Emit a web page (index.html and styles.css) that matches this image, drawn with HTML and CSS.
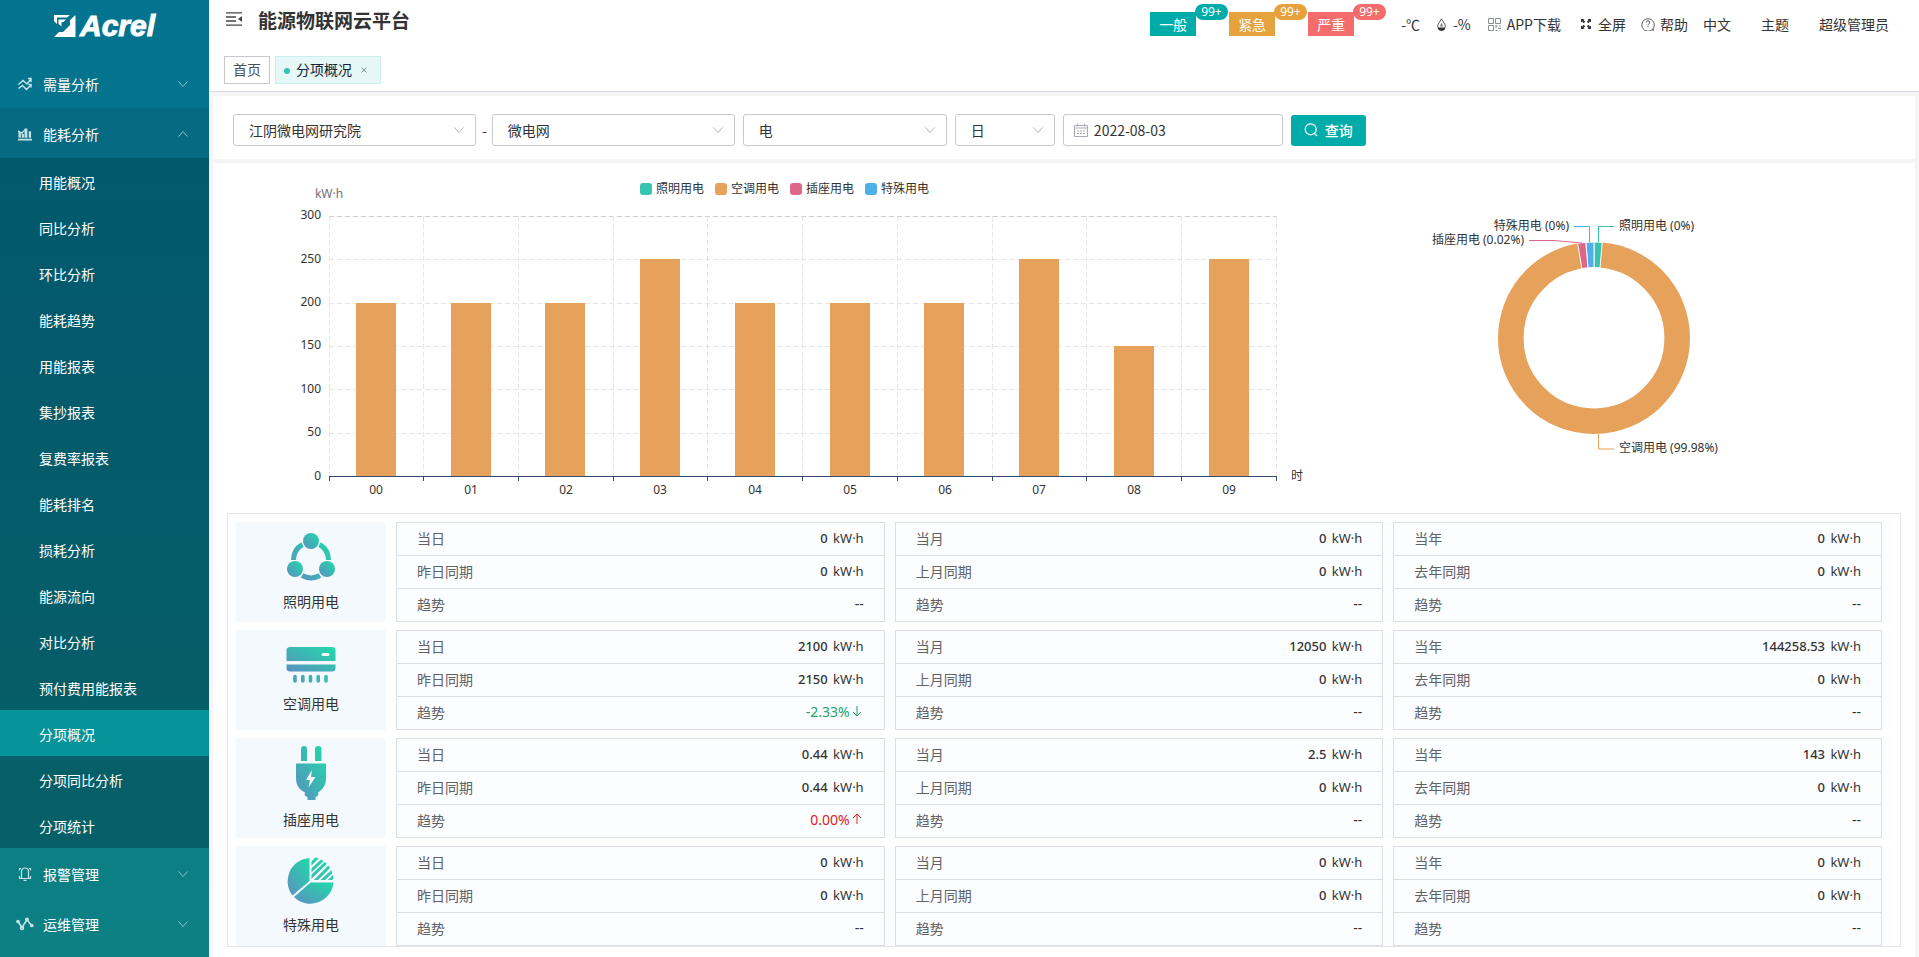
FILE: index.html
```html
<!DOCTYPE html>
<html lang="zh-CN">
<head>
<meta charset="utf-8">
<title>能源物联网云平台</title>
<link rel="stylesheet" href="styles.css">
</head>
<body>
<svg class="defs" width="0" height="0" aria-hidden="true">
  <defs>
    <linearGradient id="teal" x1="0" y1="1" x2="1" y2="0"><stop offset="0" stop-color="#5b8fc0"/><stop offset="1" stop-color="#1fdba9"/></linearGradient>
    <linearGradient id="tealUser" gradientUnits="userSpaceOnUse" x1="4" y1="48" x2="46" y2="4"><stop offset="0" stop-color="#5b8fc0"/><stop offset="1" stop-color="#1fdba9"/></linearGradient>
    <symbol id="chev" viewBox="0 0 12 12"><path d="M1.500 3.500 6 8.500l4.500-5" fill="none" stroke="currentColor"/></symbol>
  </defs>
</svg>
<div class="app">
  <nav class="sidebar">
    <a class="logo" href="#" aria-label="Acrel">
      <svg width="22" height="22" viewBox="0 0 22 22"><path d="M0 0h16l-3 2.500H3V9L0 6zM4.500 4.500H12L9.500 7H7.500v4.500L4.500 9zM21.500 0v22H0L5 17h4L16 10V5z" fill="#fff"/></svg>
      <span>Acrel</span>
    </a>
    <button class="group" type="button">
      <svg width="14" height="14" viewBox="0 0 14 14" fill="none" stroke="currentColor" stroke-width="1.500"><path d="M.5 7.500 5 3.500l4 3.500 4-5M10 1.500h3V5M.5 11.500 4.500 8.500l4 4L13 8M10.500 7.500H13v3"/></svg>
      <span>需量分析</span><svg class="arrow" width="12" height="12"><use href="#chev"/></svg>
    </button>
    <button class="group open" type="button" aria-expanded="true">
      <svg width="14" height="14" viewBox="0 0 15 14" fill="currentColor"><path d="M0 12h15v2H0zM.5 5H3v6H.5zM4 7h2.300v4H4zM7 1h3v10H7zM11.500 4H14v7h-2.500zM0 3l4 2 4-4v1.500L4.500 7 0 5z"/></svg>
      <span>能耗分析</span><svg class="arrow" width="12" height="12"><use href="#chev"/></svg>
    </button>
    <div class="submenu">
      <a href="#">用能概况</a>
      <a href="#">同比分析</a>
      <a href="#">环比分析</a>
      <a href="#">能耗趋势</a>
      <a href="#">用能报表</a>
      <a href="#">集抄报表</a>
      <a href="#">复费率报表</a>
      <a href="#">能耗排名</a>
      <a href="#">损耗分析</a>
      <a href="#">能源流向</a>
      <a href="#">对比分析</a>
      <a href="#">预付费用能报表</a>
      <a class="current" href="#">分项概况</a>
      <a href="#">分项同比分析</a>
      <a href="#">分项统计</a>
    </div>
    <button class="group" type="button">
      <svg width="14" height="14" viewBox="0 0 14 14" fill="none" stroke="currentColor" stroke-width="1.200"><path d="M3.500 11V4.500a3.500 3.500 0 0 1 7 0V11M1 11.500h12M5.500 13.300h3M1.500 3.500v-2H3M12.500 3.500v-2H11M1.500 9v2M12.500 9v2"/></svg>
      <span>报警管理</span><svg class="arrow" width="12" height="12"><use href="#chev"/></svg>
    </button>
    <button class="group" type="button">
      <svg width="14" height="14" viewBox="1 0 14 14" fill="none" stroke="currentColor" stroke-width="1.500"><path d="m1 4.500 4 6L10 2.500l4.500 6"/><circle cx="1" cy="4.500" r="1.100" fill="currentColor"/><circle cx="5" cy="11" r="1.500"/><circle cx="10" cy="2.500" r="1.200" fill="currentColor"/><circle cx="14.800" cy="8.500" r="1.100" fill="currentColor"/></svg>
      <span>运维管理</span><svg class="arrow" width="12" height="12"><use href="#chev"/></svg>
    </button>
  </nav>

  <div class="main">
    <header class="header">
      <div class="topbar">
        <button class="fold" type="button" aria-label="折叠菜单"><svg width="16" height="14" viewBox="0 0 16 14"><path d="M0 .8h16M0 5h10M0 9h10M0 13.200h16" stroke="#444" stroke-width="1.300"/><path d="M16 4v6l-4-3z" fill="#444"/></svg></button>
        <h1>能源物联网云平台</h1>
        <div class="tools">
          <button class="alarm normal" type="button">一般<span class="badge">99+</span></button>
          <button class="alarm urgent" type="button">紧急<span class="badge">99+</span></button>
          <button class="alarm severe" type="button">严重<span class="badge">99+</span></button>
          <span class="temp">-℃</span>
          <span class="humid"><svg width="9" height="13" viewBox="0 0 9 13"><path d="M4.500.8C6 3.800 8.300 6 8.300 8.500a3.800 3.800 0 0 1-7.600 0C.7 6 3 3.800 4.500.8z" fill="none" stroke="#444" stroke-width=".9"/><path d="M1 9.500h7a3.500 3.200 0 0 1-7 0z" fill="#333"/><path d="M4.500 4.500 3 8.500h3z" fill="#777"/></svg>-%</span>
          <a class="app-link" href="#"><svg width="13" height="13" viewBox="0 0 13 13" fill="none" stroke="#8a9096"><path d="M.5.5h5v5h-5zM7.500.5h5v5h-5zM.5 7.500h5v5h-5zM7.500 8h2M8 7.500v2.500M11 8h2M10 10.500h3M7.500 12.500h2M11.500 12.500h1"/></svg>APP下载</a>
          <a class="full" href="#"><svg width="12" height="12" viewBox="0 0 12 12" fill="#333"><path d="M1 1h3.500L3.500 2l1.700 1.700-1.500 1.500L2 3.500l-1 1zM11 1v3.500l-1-1-1.700 1.700-1.500-1.500L8.500 2l-1-1zM1 11V7.500l1 1 1.700-1.700 1.500 1.500L3.500 10l1 1zM11 11H7.500l1-1-1.700-1.700 1.500-1.500L10 8.500l1-1z"/></svg>全屏</a>
          <a class="help" href="#"><svg width="14" height="14" viewBox="0 0 14 14"><path d="M13 13h-2.300a6.200 6.200 0 1 1 1-.9L13 13z" fill="none" stroke="#555"/><path d="M5.300 5.500a1.700 1.700 0 1 1 2.300 1.600q-.7.300-.7 1.300M6.900 9.300v1" fill="none" stroke="#555"/></svg>帮助</a>
          <a class="lang" href="#">中文</a>
          <a class="theme" href="#">主题</a>
          <a class="user" href="#">超级管理员</a>
        </div>
      </div>
      <div class="tabs">
        <a class="tab" href="#">首页</a>
        <a class="tab active" href="#"><i class="dot"></i>分项概况<svg width="6" height="6" viewBox="0 0 6 6"><path d="m.5.5 5 5m0-5-5 5" stroke="#7d8f99"/></svg></a>
      </div>
    </header>

    <form class="filters">
      <span class="field wide"><select aria-label="单位"><option>江阴微电网研究院</option></select><svg width="12" height="12"><use href="#chev"/></svg></span>
      <span class="dash">-</span>
      <span class="field wide"><select aria-label="区域"><option>微电网</option></select><svg width="12" height="12"><use href="#chev"/></svg></span>
      <span class="field mid"><select aria-label="能源"><option>电</option></select><svg width="12" height="12"><use href="#chev"/></svg></span>
      <span class="field small"><select aria-label="周期"><option>日</option></select><svg width="12" height="12"><use href="#chev"/></svg></span>
      <span class="field date"><svg width="14" height="14" viewBox="0 0 14 14" fill="none" stroke="#a9adb3"><path d="M.5 2.500h13v11H.5zM.5 5h13M3.500.5v3M10.500.5v3"/><path d="M3 8h8M3 10.500h8" stroke-dasharray="2 1"/></svg><input type="text" value="2022-08-03" aria-label="日期"></span>
      <button class="query" type="button"><svg width="14" height="14" viewBox="0 0 14 14" fill="none" stroke="#fff" stroke-width="1.200"><circle cx="6.700" cy="6.300" r="5.500"/><path d="m10.500 10.300 2.500 2.700"/></svg>查询</button>
    </form>

    <main class="content">
      <section class="charts">
        <svg class="chart" viewBox="0 0 1134 350" role="img" aria-label="分项用电柱状图">
          <g class="legend">
            <rect x="427" y="20" width="12" height="12" rx="3" fill="#36c3b0"/><text x="443" y="30">照明用电</text>
            <rect x="502" y="20" width="12" height="12" rx="3" fill="#e6a15a"/><text x="518" y="30">空调用电</text>
            <rect x="577" y="20" width="12" height="12" rx="3" fill="#dc6789"/><text x="593" y="30">插座用电</text>
            <rect x="652" y="20" width="12" height="12" rx="3" fill="#4db0ea"/><text x="668" y="30">特殊用电</text>
          </g>
          <text class="unit" x="116" y="35" text-anchor="middle">kW·h</text>
          <path class="grid top" d="M116 53.500H1063"/>
          <path class="grid" d="M116 96.500H1063M116 140.500H1063M116 183.500H1063M116 226.500H1063M116 270.500H1063"/>
          <path class="grid" d="M116.500 53V313M210.500 53V313M305.500 53V313M400.500 53V313M494.500 53V313M589.500 53V313M684.500 53V313M779.500 53V313M873.500 53V313M968.500 53V313M1063.500 53V313"/>
          <g fill="#e6a15a">
            <rect x="143" y="140" width="40" height="173"/><rect x="238" y="140" width="40" height="173"/><rect x="332" y="140" width="40" height="173"/>
            <rect x="427" y="96" width="40" height="217"/><rect x="522" y="140" width="40" height="173"/><rect x="617" y="140" width="40" height="173"/>
            <rect x="711" y="140" width="40" height="173"/><rect x="806" y="96" width="40" height="217"/><rect x="901" y="183" width="40" height="130"/>
            <rect x="996" y="96" width="40" height="217"/>
          </g>
          <path class="axis" d="M116 313.500H1064M116.500 313v5M210.500 313v5M305.500 313v5M400.500 313v5M494.500 313v5M589.500 313v5M684.500 313v5M779.500 313v5M873.500 313v5M968.500 313v5M1063.500 313v5"/>
          <g text-anchor="end">
            <text x="108" y="56">300</text><text x="108" y="100">250</text><text x="108" y="143">200</text><text x="108" y="186">150</text><text x="108" y="230">100</text><text x="108" y="273">50</text><text x="108" y="317">0</text>
          </g>
          <g text-anchor="middle">
            <text x="163" y="331">00</text><text x="258" y="331">01</text><text x="353" y="331">02</text><text x="447" y="331">03</text><text x="542" y="331">04</text><text x="637" y="331">05</text><text x="732" y="331">06</text><text x="826" y="331">07</text><text x="921" y="331">08</text><text x="1016" y="331">09</text>
          </g>
          <text x="1078" y="317">时</text>
        </svg>
        <svg class="chart" viewBox="0 0 568 350" role="img" aria-label="分项用电占比">
          <circle cx="247" cy="175" r="83.200" fill="none" stroke="#e6a15a" stroke-width="25.600"/>
          <g stroke="#fff" stroke-width="1">
            <path d="M247 79a96 96 0 0 1 8.200.4l-2.200 25.500a70.500 70.500 0 0 0-6-.4z" fill="#36c3b0"/>
            <path d="M247 79a96 96 0 0 0-8.200.4l2.200 25.500a70.500 70.500 0 0 1 6-.4z" fill="#4db0ea"/>
            <path d="M238.800 79.400a96 96 0 0 0-8.200 1l4.300 25.100a70.500 70.500 0 0 1 6.100-.6z" fill="#dc6789"/>
          </g>
          <g fill="none">
            <path d="M251.500 79V63.500H267" stroke="#36c3b0"/>
            <path d="M242.500 79V63.500H227" stroke="#4db0ea"/>
            <path d="M235 80 207 77.500H182" stroke="#dc6789"/>
            <path d="M251.500 271v15H267" stroke="#e6a15a"/>
          </g>
          <text x="272" y="67">照明用电 (0%)</text>
          <text x="222" y="67" text-anchor="end">特殊用电 (0%)</text>
          <text x="177" y="81" text-anchor="end">插座用电 (0.02%)</text>
          <text x="272" y="289">空调用电 (99.98%)</text>
        </svg>
      </section>

      <section class="panel">
        <div class="item">
          <div class="kind"><svg width="50" height="50" viewBox="0 0 50 50"><g fill="none" stroke="url(#tealUser)" stroke-width="5"><path d="M7.500 28a18 18 0 0 1 9-15.500M33.500 12.500a18 18 0 0 1 9 15.500M16 43.500a19 19 0 0 0 18 0"/></g><g fill="url(#teal)"><circle cx="25" cy="9" r="8"/><circle cx="9" cy="37" r="8"/><circle cx="41" cy="37" r="8"/></g></svg><span>照明用电</span></div>
          <div class="blocks">
            <table><tr><th>当日</th><td><b>0</b> kW·h</td></tr><tr><th>昨日同期</th><td><b>0</b> kW·h</td></tr><tr><th>趋势</th><td class="trend">--</td></tr></table>
            <table><tr><th>当月</th><td><b>0</b> kW·h</td></tr><tr><th>上月同期</th><td><b>0</b> kW·h</td></tr><tr><th>趋势</th><td class="trend">--</td></tr></table>
            <table><tr><th>当年</th><td><b>0</b> kW·h</td></tr><tr><th>去年同期</th><td><b>0</b> kW·h</td></tr><tr><th>趋势</th><td class="trend">--</td></tr></table>
          </div>
        </div>
        <div class="item">
          <div class="kind"><svg width="50" height="38" viewBox="0 0 50 38"><path fill="url(#teal)" fill-rule="evenodd" d="M4 1h42a3.500 3.500 0 0 1 3.500 3.500V15H.5V4.500A3.500 3.500 0 0 1 4 1zm33 6a1.500 1.500 0 0 0 0 3h5a1.500 1.500 0 0 0 0-3zM.5 18.500h49V22a3.500 3.500 0 0 1-3.500 3.500H4A3.500 3.500 0 0 1 .5 22z"/><path d="M9 30.500v4.500M16.800 30.500v4.500M24.500 30.500v4.500M32.200 30.500v4.500M40 30.500v4.500" fill="none" stroke="url(#tealUser)" stroke-width="3.600" stroke-linecap="round"/></svg><span>空调用电</span></div>
          <div class="blocks">
            <table><tr><th>当日</th><td><b>2100</b> kW·h</td></tr><tr><th>昨日同期</th><td><b>2150</b> kW·h</td></tr><tr><th>趋势</th><td class="trend down">-2.33%<svg width="10" height="12" viewBox="0 0 10 12"><path d="M5 1v10M1 7l4 4 4-4" fill="none" stroke="currentColor"/></svg></td></tr></table>
            <table><tr><th>当月</th><td><b>12050</b> kW·h</td></tr><tr><th>上月同期</th><td><b>0</b> kW·h</td></tr><tr><th>趋势</th><td class="trend">--</td></tr></table>
            <table><tr><th>当年</th><td><b>144258.53</b> kW·h</td></tr><tr><th>去年同期</th><td><b>0</b> kW·h</td></tr><tr><th>趋势</th><td class="trend">--</td></tr></table>
          </div>
        </div>
        <div class="item">
          <div class="kind"><svg width="32" height="54" viewBox="0 0 32 54"><path fill="url(#teal)" fill-rule="evenodd" d="M6 15V3q0-3 3-3t3 3v12zM20 15V3q0-3 3.300-3T26.500 3v12zM1 17.500h30V32c0 8-4 12-8 14.500q1.500 3.500-2.500 4.500v3h-8v-3q-4-1-2.500-4.500C5 44 1 40 1 32zM17 24l-6 10h4l-1.500 7.500L20.500 31H16z"/></svg><span>插座用电</span></div>
          <div class="blocks">
            <table><tr><th>当日</th><td><b>0.44</b> kW·h</td></tr><tr><th>昨日同期</th><td><b>0.44</b> kW·h</td></tr><tr><th>趋势</th><td class="trend up">0.00%<svg width="10" height="12" viewBox="0 0 10 12"><path d="M5 11V1M1 5l4-4 4 4" fill="none" stroke="currentColor"/></svg></td></tr></table>
            <table><tr><th>当月</th><td><b>2.5</b> kW·h</td></tr><tr><th>上月同期</th><td><b>0</b> kW·h</td></tr><tr><th>趋势</th><td class="trend">--</td></tr></table>
            <table><tr><th>当年</th><td><b>143</b> kW·h</td></tr><tr><th>去年同期</th><td><b>0</b> kW·h</td></tr><tr><th>趋势</th><td class="trend">--</td></tr></table>
          </div>
        </div>
        <div class="item">
          <div class="kind"><svg width="50" height="48" viewBox="0 0 50 48"><defs><clipPath id="wedge"><path d="M25.500 0A23 23 0 0 1 47.500 23h-22z"/></clipPath></defs><path d="M23.500 1v23L6.500 38.500A23.300 23.300 0 0 1 23.500 1z" fill="url(#teal)"/><path d="M24.500 25.500h23A23.300 23.300 0 0 1 8 40z" fill="url(#teal)"/><path clip-path="url(#wedge)" d="M23 9 33-1M23 15.500 41-1M23 22 45 1M27 26 48 5M34 25.500 50 11M41 26l9-9" fill="none" stroke="url(#tealUser)" stroke-width="3"/></svg><span>特殊用电</span></div>
          <div class="blocks">
            <table><tr><th>当日</th><td><b>0</b> kW·h</td></tr><tr><th>昨日同期</th><td><b>0</b> kW·h</td></tr><tr><th>趋势</th><td class="trend">--</td></tr></table>
            <table><tr><th>当月</th><td><b>0</b> kW·h</td></tr><tr><th>上月同期</th><td><b>0</b> kW·h</td></tr><tr><th>趋势</th><td class="trend">--</td></tr></table>
            <table><tr><th>当年</th><td><b>0</b> kW·h</td></tr><tr><th>去年同期</th><td><b>0</b> kW·h</td></tr><tr><th>趋势</th><td class="trend">--</td></tr></table>
          </div>
        </div>
      </section>
    </main>
  </div>
</div>
</body>
</html>
```
FILE: styles.css
```css
* { box-sizing: border-box; }
body {
  margin: 0;
  font: 14px/20px "Noto Sans CJK SC", "Noto Sans", sans-serif;
  color: #333;
  background: #f5f5f7;
}
a { color: inherit; text-decoration: none; }
button, select, input { font: inherit; color: inherit; }
button { border: 0; background: none; padding: 0; cursor: pointer; }
svg { flex: none; }
.defs { position: absolute; }
.app { display: flex; min-height: 100vh; }

.sidebar {
  width: 209px;
  flex: none;
  color: #fff;
  background: linear-gradient(#03738f, #0c8083);
}
.logo {
  display: flex;
  align-items: center;
  justify-content: center;
  gap: 4px;
  height: 58px;
  padding-bottom: 6px;
  font: italic bold 30px/30px "Liberation Sans", sans-serif;
  -webkit-text-stroke: 1px #fff;
}
.group {
  display: flex;
  align-items: center;
  width: 100%;
  height: 50px;
  padding: 2px 20px 0 18px;
  text-align: left;
}
.group > svg { color: #c8e3e8; overflow: visible; }
.group span { margin: 0 auto 0 11px; }
.group .arrow { color: #8fc4cf; }
.group.open { background: #066a82; }
.group.open .arrow { transform: rotate(180deg); }
.submenu { background: rgba(0, 24, 36, 0.3); }
.submenu a {
  display: block;
  height: 46px;
  padding: 2px 0 0 39px;
  line-height: 44px;
}
.submenu .current { background: #05949a; }

.main { flex: 1; min-width: 0; display: flex; flex-direction: column; }
.header { background: #fff; border-bottom: 1px solid #d8dce5; margin-bottom: 4px; padding-bottom: 7px; }
.topbar { display: flex; align-items: flex-start; height: 56px; padding: 0 30px 0 17px; }
.fold { display: flex; padding-top: 12px; }
h1 { margin: 6px auto 0 16px; font-size: 19px; line-height: 28px; font-weight: bold; }
.tools { display: flex; align-items: center; padding-top: 12px; line-height: 24px; }
.tools a, .humid { display: flex; align-items: center; }
.alarm { position: relative; width: 46px; height: 24px; margin-right: 33px; color: #fff; line-height: 24px; }
.badge {
  position: absolute;
  top: -8px;
  left: 45px;
  padding: 0 6px;
  border-radius: 8px;
  background: inherit;
  font: 12px/16px "Noto Sans", sans-serif;
}
.normal { background: #00aca9; }
.urgent { background: #e6a23c; }
.severe { background: #f56c6c; }
.temp { margin: 0 17px 0 14px; }
.humid { gap: 7px; margin-right: 17px; }
.app-link { gap: 6px; margin-right: 19px; }
.full { gap: 6px; margin-right: 15px; }
.help { gap: 5px; margin-right: 15px; }
.lang, .theme { margin-right: 30px; }
.tabs { display: flex; gap: 5px; padding-left: 15px; }
.tab {
  display: flex;
  align-items: center;
  height: 28px;
  padding: 0 8px 2px;
  border: 1px solid #c8c8cc;
  color: #495060;
}
.tab.active { padding-right: 13px; border-color: #cdeeec; background: #e5f7f6; color: #123; }
.dot { width: 6px; height: 6px; margin: 4px 6px 0 0; border-radius: 50%; background: #36c3b0; }
.tab svg { margin: 2px 0 0 9px; }

.filters {
  display: flex;
  align-items: center;
  gap: 8px;
  height: 63px;
  margin: 0 4px 4px;
  padding: 5px 20px 0;
  background: #fff;
}
.field { position: relative; display: flex; align-items: center; }
.field > svg { position: absolute; right: 11px; color: #aeb2b8; pointer-events: none; }
.field select, .field input {
  width: 100%;
  height: 32px;
  padding: 0 15px;
  border: 1px solid #c8c9cc;
  border-radius: 3px;
  background: #fff;
  appearance: none;
}
.wide { width: 243px; }
.mid { width: 204px; }
.small { width: 100px; }
.date { width: 220px; }
.date > svg { left: 11px; }
.date input { padding-left: 30px; }
.dash { margin: 0 -3px 0 -2px; }
.query {
  display: flex;
  align-items: center;
  justify-content: center;
  gap: 7px;
  width: 75px;
  height: 31px;
  border-radius: 3px;
  background: #00aca9;
  color: #fff;
  font-weight: 500;
}

.content { flex: 1; margin: 0 4px; background: #fff; }
.charts { display: grid; grid-template-columns: minmax(0, 1fr) 568px; }
.chart { display: block; width: 100%; height: 350px; font: 12px "Noto Sans", "Noto Sans CJK SC", sans-serif; fill: #333; }
.chart .unit { fill: #6e7079; }
.grid { fill: none; stroke: #e6e6e9; stroke-dasharray: 5 3; }
.grid.top { stroke: #cfcfd2; }
.axis { fill: none; stroke: #354a70; }

.panel { margin: 0 14px; padding: 8px 8px 0; border: 1px solid #e2e4e6; }
.item { display: flex; gap: 10px; }
.item + .item { margin-top: 8px; }
.kind {
  display: flex;
  flex-direction: column;
  align-items: center;
  justify-content: center;
  gap: 9px;
  width: 150px;
  height: 100px;
  padding-bottom: 1px;
  background: #f3f9fc;
}
.blocks {
  flex: 1;
  display: grid;
  grid-template-columns: repeat(3, 1fr);
  gap: 10px;
  padding-right: 10px;
  background: #fbfdff;
}
table { width: 100%; border: 1px solid #dcdfe3; border-collapse: collapse; }
tr { height: 33px; border-bottom: 1px solid #dcdfe3; }
th, td { padding: 0 20px 2px; line-height: 20px; }
th { text-align: left; font-weight: normal; color: #606266; }
td { text-align: right; font-family: "Noto Sans", sans-serif; font-size: 13px; }
td b { margin-right: 2px; font-weight: 500; }
.trend { font-size: 14px; }
.trend svg { margin: 0 2px; }
.down { color: #1fa363; }
.up { color: #e02020; }
```
